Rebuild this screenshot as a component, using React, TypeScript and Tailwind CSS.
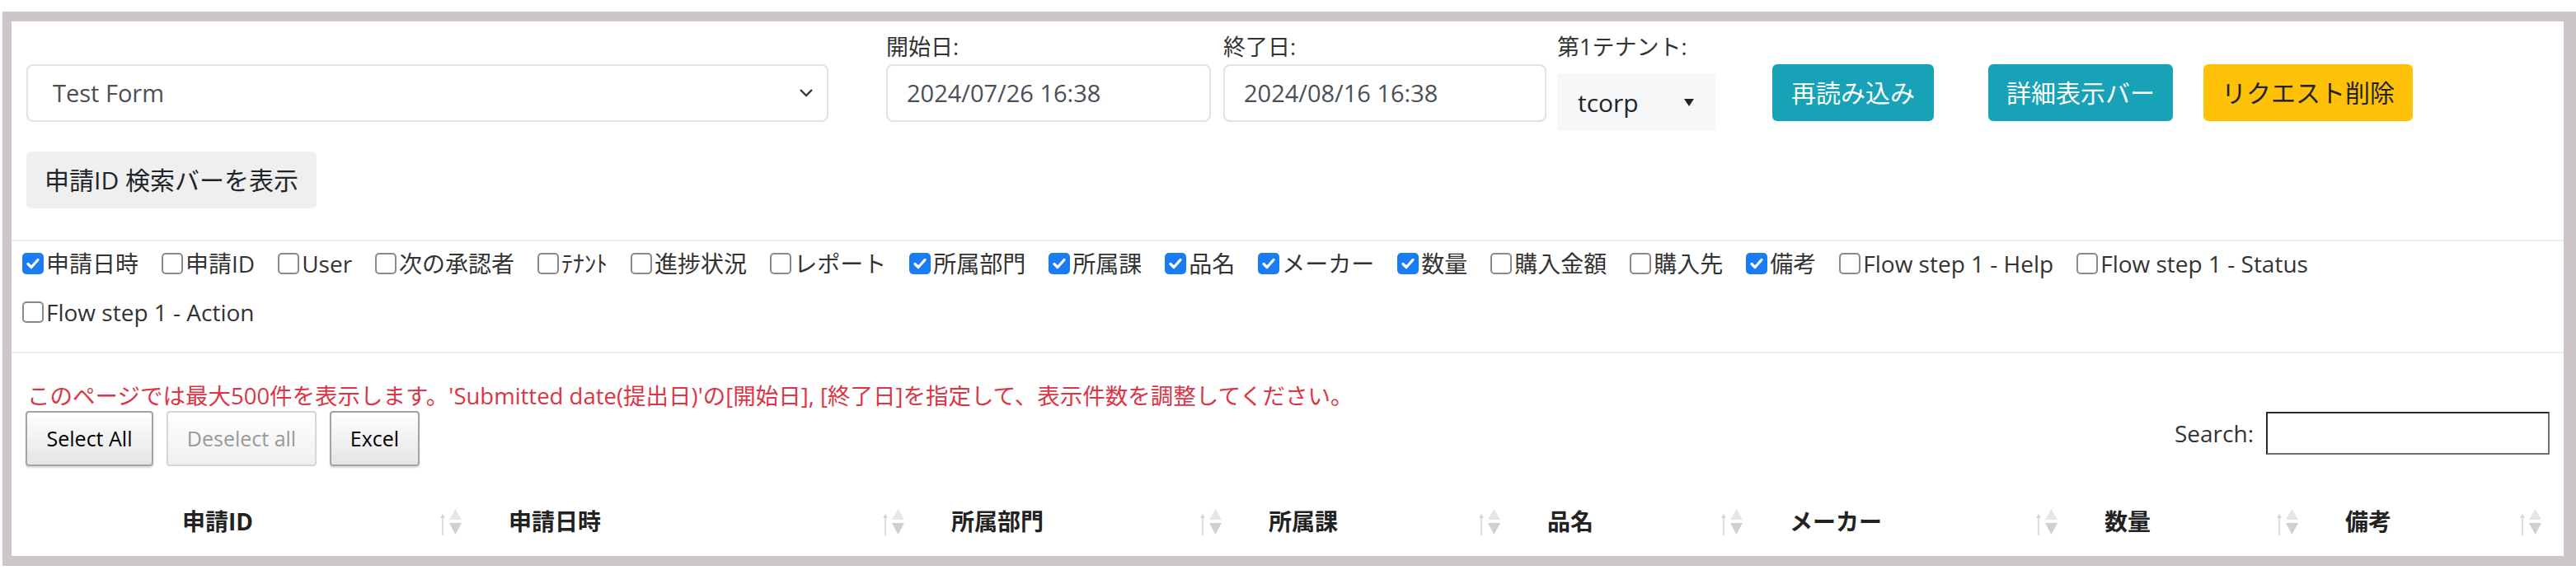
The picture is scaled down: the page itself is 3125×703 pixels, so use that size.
const columns: [string, boolean][] = [
  ["申請日時", true],
  ["申請ID", false],
  ["User", false],
  ["次の承認者", false],
  ["ﾃﾅﾝﾄ", false],
  ["進捗状況", false],
  ["レポート", false],
  ["所属部門", true],
  ["所属課", true],
  ["品名", true],
  ["メーカー", true],
  ["数量", true],
  ["購入金額", false],
  ["購入先", false],
  ["備考", true],
  ["Flow step 1 - Help", false],
  ["Flow step 1 - Status", false],
  ["Flow step 1 - Action", false],
];

const headers = ["申請ID", "申請日時", "所属部門", "所属課", "品名", "メーカー", "数量", "備考"];

function Check({ checked }: { checked: boolean }) {
  if (checked) {
    return (
      <span className="w-[26px] h-[26px] rounded-[5px] bg-[#1a7cf2] flex items-center justify-center shrink-0">
        <svg width="20" height="20" viewBox="0 0 20 20">
          <path d="M4 10.5l4 4 8-9" fill="none" stroke="white" strokeWidth="3.2" strokeLinecap="round" strokeLinejoin="round" />
        </svg>
      </span>
    );
  }
  return <span className="w-[26px] h-[26px] rounded-[5px] border-2 border-[#8a8a8a] bg-white shrink-0" />;
}

function SortIcon() {
  return (
    <svg width="28" height="36" viewBox="0 0 28 36" className="shrink-0">
      <line x1="3" y1="11" x2="3" y2="35" stroke="#dcdcdc" strokeWidth="2" />
      <polygon points="0,14 3,9 6,14" fill="#d6d6d6" />
      <polygon points="11,16 18.5,3 26,16" fill="#e6e6e6" />
      <polygon points="11,20 18.5,34 26,20" fill="#d0d0d0" />
    </svg>
  );
}

export default function App() {
  return (
    <div className="w-[3125px] h-[703px] bg-white pt-[14px] pl-[3px] overflow-hidden font-['Open_Sans','Noto_Sans_CJK_JP',sans-serif] text-[#212529]">
      <div className="w-[3122px] h-[673px] border-t-[12px] border-b-[12px] border-l-[11px] border-r-[15px] border-[#cdc6c8] bg-white overflow-hidden">
        {/* filters */}
        <div className="flex items-start pl-[18px] pt-[10px]">
          <div className="mt-[42px] w-[973px] h-[70px] border-2 border-[#dfe2e6] rounded-[8px] flex items-center justify-between pl-[30px] pr-[14px] text-[29px] text-[#495057]">
            <span>Test Form</span>
            <svg width="22" height="14" viewBox="0 0 22 14">
              <polyline points="4,3 11,10 18,3" fill="none" stroke="#343a40" strokeWidth="2.4" />
            </svg>
          </div>
          <div className="ml-[70px] w-[394px]">
            <div className="h-[42px] leading-[42px] text-[27px] text-[#333]">開始日:</div>
            <div className="h-[70px] border-2 border-[#dfe2e6] rounded-[8px] flex items-center pl-[23px] text-[29px] text-[#495057]">2024/07/26 16:38</div>
          </div>
          <div className="ml-[15px] w-[392px]">
            <div className="h-[42px] leading-[42px] text-[27px] text-[#333]">終了日:</div>
            <div className="h-[70px] border-2 border-[#dfe2e6] rounded-[8px] flex items-center pl-[23px] text-[29px] text-[#495057]">2024/08/16 16:38</div>
          </div>
          <div className="ml-[13px] w-[192px]">
            <div className="h-[42px] leading-[42px] text-[27px] text-[#333]">第1テナント:</div>
            <div className="mt-[11px] h-[70px] rounded-[4px] bg-[#f6f7f8] flex items-center justify-between pl-[25px] pr-[26px] text-[30px] text-[#212529]">
              <span>tcorp</span>
              <svg width="12" height="9" viewBox="0 0 12 9">
                <polygon points="0,0 12,0 6,9" fill="#222" />
              </svg>
            </div>
          </div>
          <button className="mt-[42px] ml-[69px] w-[196px] h-[69px] rounded-[6px] bg-[#17a2b8] text-white text-[30px]">再読み込み</button>
          <button className="mt-[42px] ml-[66px] w-[224px] h-[69px] rounded-[6px] bg-[#17a2b8] text-white text-[30px]">詳細表示バー</button>
          <button className="mt-[42px] ml-[37px] w-[254px] h-[69px] rounded-[6px] bg-[#ffc107] text-[#212529] text-[30px]">リクエスト削除</button>
        </div>
        <div className="pl-[18px] mt-[25px] pb-[38px]">
          <button className="w-[352px] h-[69px] rounded-[6px] bg-[#efefef] text-[30px] text-[#212529]">申請ID 検索バーを表示</button>
        </div>
        <div className="h-[2px] bg-[#eceef0]" />

        {/* column toggles */}
        <div className="flex flex-wrap gap-y-[17px] pl-[13px] pr-[10px] pt-[6px] pb-[27px] text-[28px] text-[#333]">
          {columns.map(([name, checked]) => (
            <label key={name} className="flex items-center h-[42px] mr-[28px]">
              <Check checked={checked} />
              <span className="ml-[3px] whitespace-nowrap">{name}</span>
            </label>
          ))}
        </div>
        <div className="h-[2px] bg-[#eceef0]" />

        {/* table area */}
        <div className="pt-[33px] pl-[19px] text-[27.5px] leading-[37px] text-[#dc3545] whitespace-nowrap">
          このページでは最大500件を表示します。'Submitted date(提出日)'の[開始日], [終了日]を指定して、表示件数を調整してください。
        </div>
        <div className="flex items-start justify-between pl-[17px] pr-[17px]">
          <div className="flex gap-[16px]">
            <button className="w-[155px] h-[67px] border-2 border-[#a4a4a4] rounded-[4px] bg-linear-to-b from-white to-[#e4e4e4] text-[25px] text-black shadow-[0_2px_2px_rgba(0,0,0,0.15)]">Select All</button>
            <button className="w-[182px] h-[67px] border-2 border-[#d6d6d6] rounded-[4px] bg-linear-to-b from-white to-[#f0f0f0] text-[25px] text-[#9a9a9a]">Deselect all</button>
            <button className="w-[109px] h-[67px] border-2 border-[#a4a4a4] rounded-[4px] bg-linear-to-b from-white to-[#e4e4e4] text-[25px] text-black shadow-[0_2px_2px_rgba(0,0,0,0.15)]">Excel</button>
          </div>
          <div className="mt-[1px] flex items-center h-[52px]">
            <span className="text-[28px] text-[#333] mr-[15px]">Search:</span>
            <div className="w-[344px] h-[52px] border-2 border-[#2a2a2a] border-b-[#6f6f6f] border-r-[#6f6f6f] bg-white" />
          </div>
        </div>
        <div className="mt-[24px] ml-[18px] h-[85px] grid grid-cols-[142px_396px_537px_385px_338px_294px_382px_292px_295px]">
          <div />
          {headers.map((h) => (
            <div key={h} className="flex items-center justify-between pl-[47px] pr-[8px] text-[28px] font-bold text-[#222]">
              <span>{h}</span>
              <SortIcon />
            </div>
          ))}
        </div>
      </div>
    </div>
  );
}
